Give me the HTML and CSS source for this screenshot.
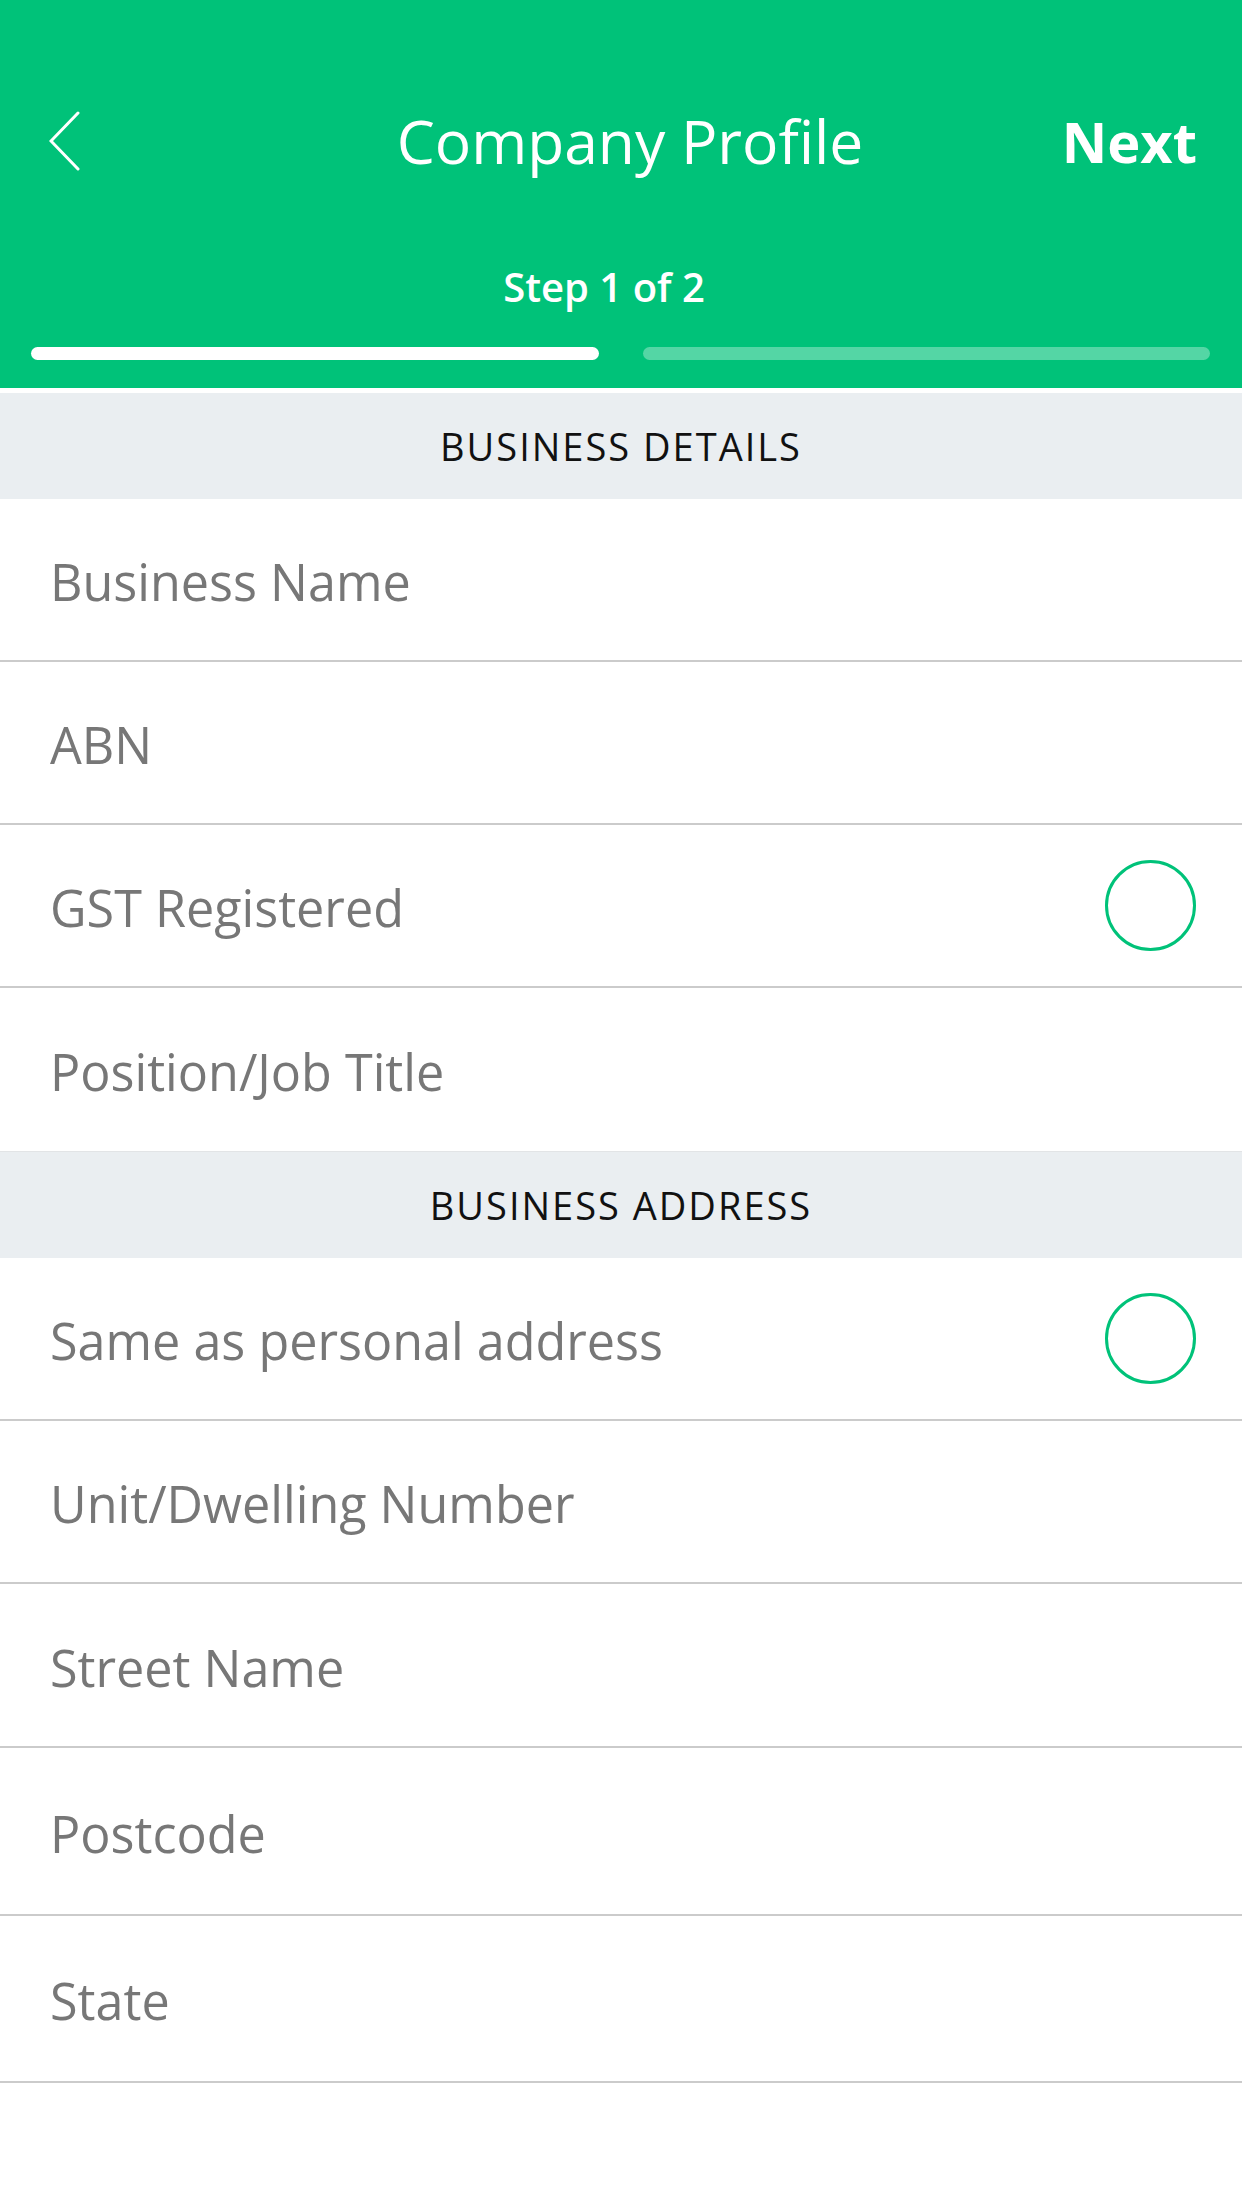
FILE: index.html
```html
<!DOCTYPE html>
<html lang="en">
<head>
<meta charset="utf-8">
<title>Company Profile</title>
<link rel="stylesheet" href="styles.css">
</head>
<body>
<div class="screen">
  <header class="header">
    <div class="topbar">
      <div class="back">
        <svg class="back-icon" width="32" height="60" viewBox="0 0 32 60" aria-hidden="true">
          <polyline points="29,2 2,30 29,58" fill="none" stroke="#ffffff" stroke-width="3" stroke-linecap="round" stroke-linejoin="miter"/>
        </svg>
      </div>
      <h1 class="title">Company Profile</h1>
      <div class="next">Next</div>
    </div>
    <div class="step">Step 1 of 2</div>
    <div class="progress">
      <div class="bar bar-active"></div>
      <div class="bar bar-idle"></div>
    </div>
  </header>

  <section class="group">
    <div class="group-title">BUSINESS DETAILS</div>
    <div class="row"><span class="label">Business Name</span></div>
    <div class="row"><span class="label">ABN</span></div>
    <div class="row"><span class="label">GST Registered</span><span class="radio"></span></div>
    <div class="row row-last"><span class="label">Position/Job Title</span></div>
  </section>

  <section class="group">
    <div class="group-title group-title-2">BUSINESS ADDRESS</div>
    <div class="row"><span class="label">Same as personal address</span><span class="radio"></span></div>
    <div class="row"><span class="label">Unit/Dwelling Number</span></div>
    <div class="row row-mid"><span class="label">Street Name</span></div>
    <div class="row row-tall"><span class="label">Postcode</span></div>
    <div class="row row-tall2"><span class="label">State</span></div>
  </section>
</div>
</body>
</html>
```

FILE: styles.css
```css
* {
  box-sizing: border-box;
}

html, body {
  margin: 0;
  padding: 0;
  background: #ffffff;
}

body {
  font-family: "Open Sans", "Noto Sans", "Liberation Sans", sans-serif;
  width: 1242px;
  min-height: 2208px;
}

.screen {
  width: 1242px;
}

.header {
  background: #00c279;
  height: 388px;
  padding-top: 81px;
  margin-bottom: 5px;
  color: #ffffff;
}

.topbar {
  display: grid;
  grid-template-columns: 1fr auto 1fr;
  align-items: center;
  height: 120px;
}

.back {
  padding-left: 49px;
  display: flex;
  align-items: center;
  padding-top: 0;
}

.back-icon {
  display: block;
}

.title {
  margin: 0;
  padding-left: 18px;
  font-size: 60.5px;
  font-weight: 400;
  line-height: 120px;
  letter-spacing: 0;
  white-space: nowrap;
}

.next {
  justify-self: end;
  padding-right: 45px;
  font-size: 56px;
  font-weight: 700;
  line-height: 120px;
}

.step {
  margin-top: 60px;
  height: 52px;
  line-height: 52px;
  font-size: 40px;
  font-weight: 600;
  text-align: center;
  padding-right: 34px;
}

.progress {
  display: flex;
  gap: 44px;
  margin-top: 34px;
  padding: 0 32px 0 31px;
}

.bar {
  flex: 1;
  height: 13px;
  border-radius: 7px;
}

.bar-active {
  background: #ffffff;
}

.bar-idle {
  background: rgba(255, 255, 255, 0.33);
}

.group-title {
  height: 106px;
  background: #eaeef1;
  display: flex;
  align-items: center;
  justify-content: center;
  font-size: 38px;
  font-weight: 500;
  color: #111111;
  letter-spacing: 2px;
}

.group-title-2 {
  height: 107px;
  border-top: 1px solid #e2e4e6;
}

.row {
  height: 163px;
  display: flex;
  align-items: center;
  justify-content: space-between;
  padding: 0 46px 0 50px;
  border-bottom: 2px solid #cbcbcb;
}

.row-last {
  border-bottom: none;
}

.row-mid {
  height: 164px;
}

.row-tall {
  height: 168px;
}

.row-tall2 {
  height: 167px;
}

.label {
  font-size: 50.3px;
  font-weight: 400;
  color: #777777;
  padding-top: 4px;
}

.radio {
  width: 91px;
  height: 91px;
  border: 3px solid #00c279;
  border-radius: 50%;
  flex: none;
}
```
